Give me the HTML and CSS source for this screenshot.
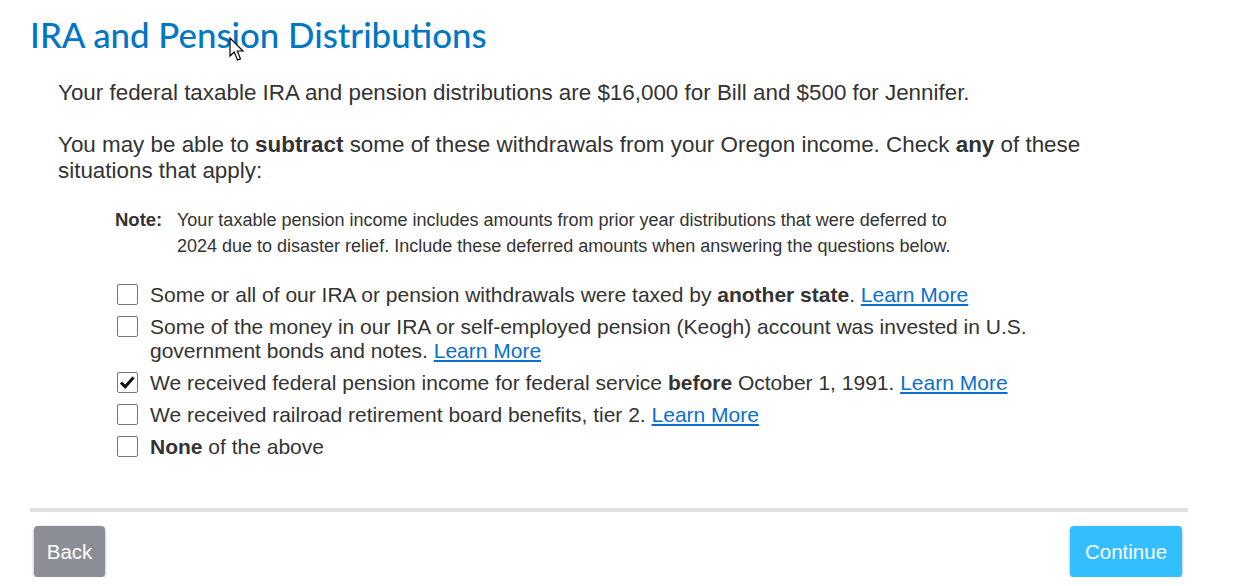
FILE: index.html
```html
<!DOCTYPE html>
<html>
<head>
<meta charset="utf-8">
<link rel="stylesheet" href="styles.css">
</head>
<body>
<div class="page">
  <h1 class="title">IRA and Pension Distributions</h1>
  <div class="content">
    <p class="lead">Your federal taxable IRA and pension distributions are $16,000 for Bill and $500 for Jennifer.</p>
    <p class="lead second">You may be able to <b>subtract</b> some of these withdrawals from your Oregon income. Check <b>any</b> of these situations that apply:</p>
    <div class="note">
      <span class="note-label">Note:</span>
      <span class="note-text">Your taxable pension income includes amounts from prior year distributions that were deferred to 2024 due to disaster relief. Include these deferred amounts when answering the questions below.</span>
    </div>
    <ul class="options">
      <li class="option"><span class="box"></span><span class="label">Some or all of our IRA or pension withdrawals were taxed by <b>another state</b>. <a href="#">Learn More</a></span></li>
      <li class="option"><span class="box"></span><span class="label">Some of the money in our IRA or self-employed pension (Keogh) account was invested in U.S. government bonds and notes. <a href="#">Learn More</a></span></li>
      <li class="option"><span class="box checked"><svg viewBox="0 0 21 21" width="21" height="21"><path d="M4 10.5 L8.2 14.8 L16.5 5.5" fill="none" stroke="#111" stroke-width="3"/></svg></span><span class="label">We received federal pension income for federal service <b>before</b> October 1, 1991. <a href="#">Learn More</a></span></li>
      <li class="option"><span class="box"></span><span class="label">We received railroad retirement board benefits, tier 2. <a href="#">Learn More</a></span></li>
      <li class="option"><span class="box"></span><span class="label"><b>None</b> of the above</span></li>
    </ul>
  </div>
  <div class="divider"></div>
  <div class="actions">
    <button class="btn back">Back</button>
    <button class="btn continue">Continue</button>
  </div>
  <svg class="cursor" viewBox="0 0 18 26" width="18" height="26"><path d="M1 1 L1 19 L5.2 15 L8.5 23 L11.5 21.8 L8.3 14 L14 14 Z" fill="#fff" stroke="#000" stroke-width="1.2" stroke-linejoin="miter"/></svg>
</div>
</body>
</html>
```

FILE: styles.css
```css
html, body {
  margin: 0;
  padding: 0;
  background: #fff;
}
.page {
  position: relative;
  width: 1188px;
  font-family: "Liberation Sans", Arial, sans-serif;
  color: #333;
}
.title {
  margin: 0;
  padding: 13px 0 0 30px;
  font-family: Lato, "Open Sans", sans-serif;
  font-weight: 500;
  font-size: 34.8px;
  line-height: 44px;
  color: #0077c5;
}
.cursor {
  position: absolute;
  left: 229px;
  top: 37px;
}
.content {
  padding-left: 58px;
}
.lead {
  margin: 0;
  font-size: 22.4px;
  line-height: 26px;
  padding-top: 23px;
}
.lead.second {
  padding-top: 26px;
  width: 1040px;
}
.note {
  display: flex;
  margin: 23px 0 0 57px;
  font-size: 18px;
  line-height: 26px;
}
.note-label {
  font-weight: bold;
  font-size: 18.5px;
  width: 62px;
  flex: none;
}
.note-text {
  width: 785px;
}
.options {
  list-style: none;
  margin: 24px 0 0 59px;
  padding: 0;
}
.option {
  display: flex;
  align-items: flex-start;
  font-size: 21px;
  line-height: 24px;
  margin-bottom: 8px;
}
.box {
  flex: none;
  box-sizing: border-box;
  width: 21px;
  height: 21px;
  border: 1px solid #767676;
  border-radius: 2px;
  margin: 1px 12px 0 0;
  position: relative;
}
.box svg {
  position: absolute;
  left: -1px;
  top: -1px;
}
.label {
  width: 900px;
}
.label a {
  color: #0a6fd0;
  text-decoration: underline;
}
.divider {
  margin: 49px 0 0 30px;
  height: 4px;
  background: #e0e0e0;
}
.actions {
  display: flex;
  justify-content: space-between;
  padding: 14px 6px 0 34px;
}
.btn {
  font-family: "Liberation Sans", Arial, sans-serif;
  font-size: 20.5px;
  color: #fff;
  border: none;
  border-radius: 4px;
  height: 51px;
  box-shadow: 0 1px 3px rgba(0,0,0,0.35);
}
.back {
  background: #8b8e96;
  width: 71px;
}
.continue {
  background: #33bfff;
  width: 112px;
}
```
